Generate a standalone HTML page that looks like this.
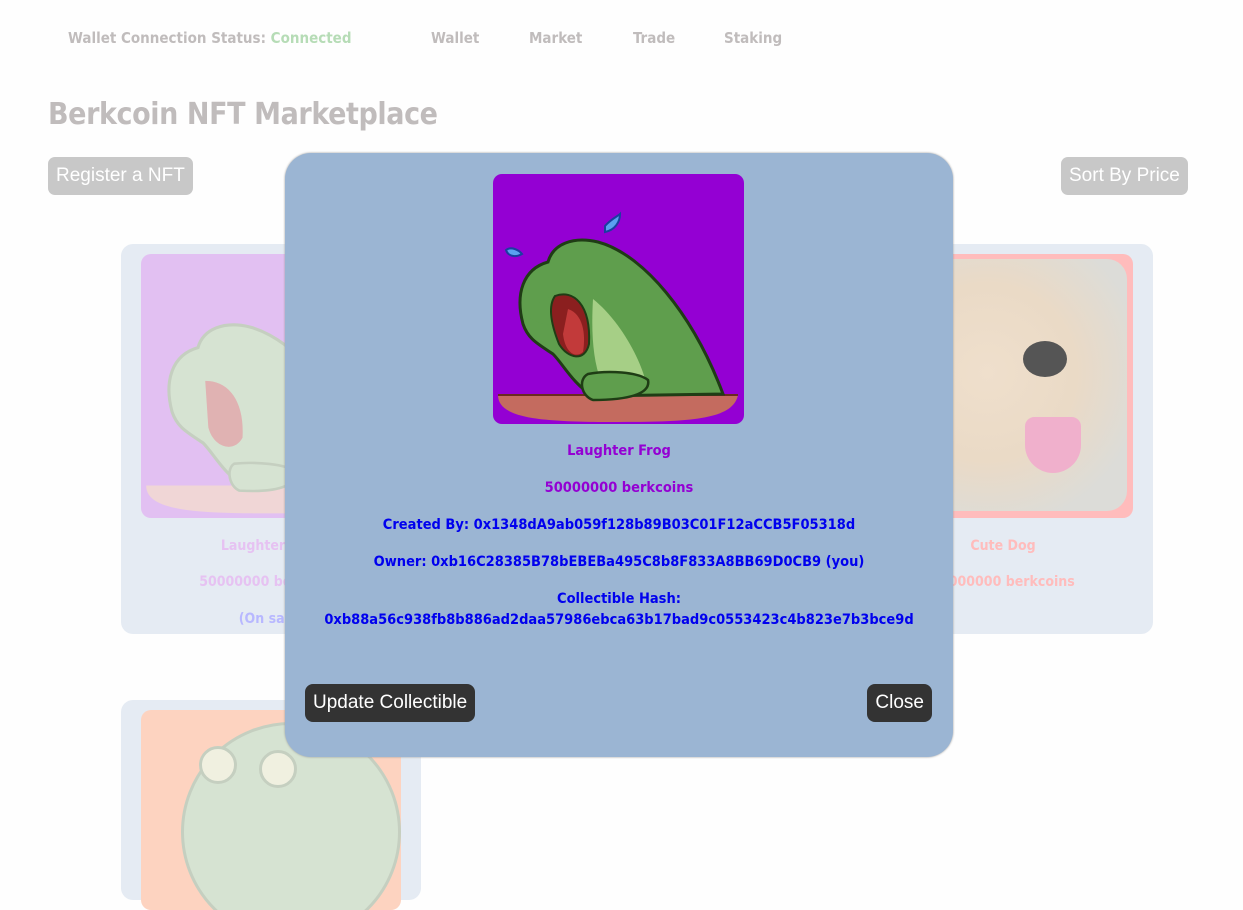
<!DOCTYPE html>
<html><head><meta charset="utf-8"><style>
*{box-sizing:border-box}
body{margin:0;width:1243px;height:837px;overflow:hidden;background:#fefefe;font-family:"Liberation Sans",sans-serif;position:relative}
.nav{position:absolute;top:29px;font-weight:bold;font-size:15px;color:#c0bcbc;font-family:"DejaVu Sans Condensed","Liberation Sans",sans-serif}
h1{position:absolute;left:48px;top:97px;margin:0;font-size:30px;color:#c0bcbc;font-family:"DejaVu Sans Condensed","Liberation Sans",sans-serif;font-weight:bold;letter-spacing:-0.4px}
.btn{position:absolute;background:#c8c8c8;color:#fff;font-size:19px;border-radius:7px;height:38px;line-height:38px;padding:0 8px}
.card{position:absolute;background:#e5ebf3;border-radius:12px}
.ct{position:absolute;width:100%;text-align:center;font-weight:bold;font-size:14px;font-family:"DejaVu Sans Condensed","Liberation Sans",sans-serif}
.modal{position:absolute;left:285px;top:153px;width:668px;height:604px;background:#9bb5d3;border-radius:26px;box-shadow:0 0 2px #999}
.mt{position:absolute;left:0;width:100%;text-align:center;font-weight:bold;font-size:14.5px;font-family:"DejaVu Sans Condensed","Liberation Sans",sans-serif}
.dbtn{position:absolute;top:531px;height:38px;line-height:38px;background:#333;color:#fff;font-size:19px;border-radius:8px;padding:0 8px}
</style></head><body>
<div class="nav" style="left:68px">Wallet Connection Status: <span style="color:#b6dcb6">Connected</span></div>
<div class="nav" style="left:431px">Wallet</div>
<div class="nav" style="left:529px">Market</div>
<div class="nav" style="left:633px">Trade</div>
<div class="nav" style="left:724px">Staking</div>
<h1>Berkcoin NFT Marketplace</h1>
<div class="btn" style="left:48px;top:157px">Register a NFT</div>
<div class="btn" style="left:1061px;top:157px">Sort By Price</div>

<div class="card" style="left:121px;top:244px;width:300px;height:390px">
 <div style="position:absolute;left:20px;top:10px;width:260px;height:264px;background:#e2c0f2;border-radius:10px;overflow:hidden">
  <svg width="260" height="264" viewBox="0 0 251 250">
   <path d="M5 221 L245 221 C240 245 200 248 125 248 C50 248 5 245 5 221Z" fill="#f0d6d6"/>
   <path d="M30 150 C22 120 30 95 55 88 C60 70 80 62 105 68 C150 80 200 140 230 220 L100 222 C80 210 70 190 60 180 C45 170 35 165 30 150Z" fill="#d6e3d2" stroke="#c5cfc0" stroke-width="3"/>
   <path d="M62 120 C85 120 100 140 98 175 C90 190 70 185 65 165Z" fill="#e0b2b2"/>
   <path d="M90 200 C110 198 140 200 150 208 C150 222 130 228 95 226 C85 222 82 205 90 200Z" fill="#d6e3d2" stroke="#c5cfc0" stroke-width="2.5"/>
  </svg>
 </div>
 <div class="ct" style="top:294px;color:#e6c2f2">Laughter Frog</div>
 <div class="ct" style="top:330px;color:#e6c2f2">50000000 berkcoins</div>
 <div class="ct" style="top:367px;color:#b8b8ff">(On sale)</div>
</div>
<div class="card" style="left:853px;top:244px;width:300px;height:390px">
 <div style="position:absolute;left:20px;top:10px;width:260px;height:264px;background:#ffbcbc;border-radius:10px;padding:5px 6px 7px 0">
  <div style="width:100%;height:100%;border-radius:20px;background:radial-gradient(ellipse at 45% 45%,#efdfcc 0,#eadac6 45%,#dcdcd8 80%);position:relative;overflow:hidden">
   <div style="position:absolute;left:150px;top:82px;width:44px;height:36px;border-radius:50%;background:#555"></div>
   <div style="position:absolute;left:152px;top:158px;width:56px;height:56px;border-radius:10px 10px 30px 30px;background:#f0b0cc"></div>
  </div>
 </div>
 <div class="ct" style="top:294px;color:#ffbcbc">Cute Dog</div>
 <div class="ct" style="top:330px;color:#ffbcbc">50000000 berkcoins</div>
</div>
<div class="card" style="left:121px;top:700px;width:300px;height:200px">
 <div style="position:absolute;left:20px;top:10px;width:260px;height:200px;background:#fdd3c0;border-radius:10px;overflow:hidden">
  <div style="position:absolute;left:40px;top:12px;width:220px;height:220px;border-radius:50%;background:#d6e3d2;border:3px solid #c5cfc0"></div>
  <div style="position:absolute;left:58px;top:36px;width:38px;height:38px;border-radius:50%;background:#f0f0e0;border:3px solid #c5cfc0"></div>
  <div style="position:absolute;left:118px;top:40px;width:38px;height:38px;border-radius:50%;background:#f0f0e0;border:3px solid #c5cfc0"></div>
 </div>
</div>

<div class="modal">
 <div style="position:absolute;left:208px;top:21px;width:251px;height:250px;background:#9400d3;border-radius:9px;overflow:hidden">
  <svg width="251" height="250" viewBox="0 0 251 250">
   <path d="M5 221 L245 221 C240 245 200 248 125 248 C50 248 5 245 5 221Z" fill="#c46b5f"/>
   <path d="M5 221 L245 221" stroke="#6b2a20" stroke-width="2"/>
   <path d="M30 150 C22 120 30 95 55 88 C60 70 80 62 105 68 C150 80 200 140 230 220 L100 222 C80 210 70 190 60 180 C45 170 35 165 30 150Z" fill="#5f9e4d" stroke="#1f3d15" stroke-width="3"/>
   <path d="M30 140 C45 150 60 155 70 145 C85 140 75 120 70 115 C55 125 40 130 30 140Z" fill="#5f9e4d"/>
   <path d="M62 122 C80 115 98 130 96 170 C92 188 75 185 66 170 C58 150 55 132 62 122Z" fill="#8b1f1f" stroke="#1f3d15" stroke-width="2"/>
   <path d="M75 135 C90 140 93 160 90 178 C82 185 72 178 70 160Z" fill="#c23a3a"/>
   <path d="M100 125 C125 145 145 180 152 205 L110 212 C100 190 98 160 100 125Z" fill="#a6cf86"/>
   <path d="M95 200 C115 196 145 198 155 206 C158 220 135 226 100 226 C88 222 85 205 95 200Z" fill="#5f9e4d" stroke="#1f3d15" stroke-width="2.5"/>
   <path d="M112 52 C118 45 125 42 127 40 C127 48 122 56 112 58Z" fill="#5aa0f0" stroke="#1a3fa0" stroke-width="2"/>
   <path d="M13 76 C18 72 26 76 29 80 C22 84 15 82 13 76Z" fill="#5aa0f0" stroke="#1a3fa0" stroke-width="2"/>
  </svg>
 </div>
 <div class="mt" style="top:290px;color:#9400d3">Laughter Frog</div>
 <div class="mt" style="top:327px;color:#9400d3">50000000 berkcoins</div>
 <div class="mt" style="top:364px;color:#0000ee">Created By: 0x1348dA9ab059f128b89B03C01F12aCCB5F05318d</div>
 <div class="mt" style="top:401px;color:#0000ee">Owner: 0xb16C28385B78bEBEBa495C8b8F833A8BB69D0CB9 (you)</div>
 <div class="mt" style="top:438px;color:#0000ee">Collectible Hash:</div>
 <div class="mt" style="top:459px;color:#0000ee">0xb88a56c938fb8b886ad2daa57986ebca63b17bad9c0553423c4b823e7b3bce9d</div>
 <div class="dbtn" style="left:20px">Update Collectible</div>
 <div class="dbtn" style="right:21px">Close</div>
</div>
</body></html>
